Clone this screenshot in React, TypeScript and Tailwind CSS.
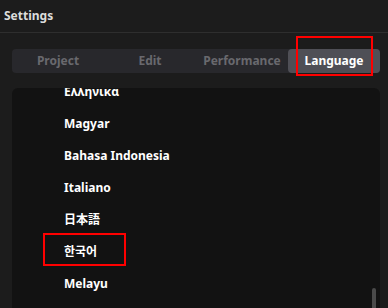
const tabs = ["Project", "Edit", "Performance", "Language"];

const languages = [
  "Ελληνικα",
  "Magyar",
  "Bahasa Indonesia",
  "Italiano",
  "日本語",
  "한국어",
  "Melayu",
];

export default function App() {
  return (
    <div
      className="relative flex h-[308px] w-[388px] flex-col overflow-hidden bg-[#1c1c1c] text-white"
      style={{ fontFamily: '"Noto Sans", "Noto Sans CJK KR", "Noto Sans CJK JP", sans-serif' }}
    >
      {/* Header */}
      <div className="flex h-[33px] shrink-0 items-center border-b border-[#2e2e2e] px-1">
        <span className="text-[12px] font-bold text-[#dcdcdc]">Settings</span>
      </div>

      {/* Tabs */}
      <div className="pl-3 pr-2 pt-4">
        <div className="grid h-6 grid-cols-4 rounded bg-[#28282c]">
          {tabs.map((t) => (
            <div
              key={t}
              className={
                t === "Language"
                  ? "relative flex items-center justify-center rounded bg-[#4f4f56] text-[12px] font-bold text-white"
                  : "flex items-center justify-center text-[12px] font-bold text-[#69696e]"
              }
            >
              {t}
              {t === "Language" && (
                <div className="absolute -top-[13px] left-2 right-[7px] -bottom-[3px] border-2 border-[#ff0000]" />
              )}
            </div>
          ))}
        </div>
      </div>

      {/* Language list */}
      <div className="relative ml-3 mr-2 mt-[15px] flex-1 overflow-hidden rounded-t-md bg-[#121212]">
        <div className="-mt-3 flex flex-col">
          {languages.map((l) => (
            <div key={l} className="relative flex h-8 items-center pl-[52px] text-[12px] font-bold text-white">
              {l}
              {l === "한국어" && (
                <div className="absolute left-[31px] top-[-3px] h-[33px] w-[83px] border-2 border-[#ff0000]" />
              )}
            </div>
          ))}
        </div>
        {/* scrollbar */}
        <div className="absolute right-[4px] top-[200px] h-[24px] w-[4px] rounded-t-sm bg-[#4a4a4a]" />
      </div>
    </div>
  );
}
